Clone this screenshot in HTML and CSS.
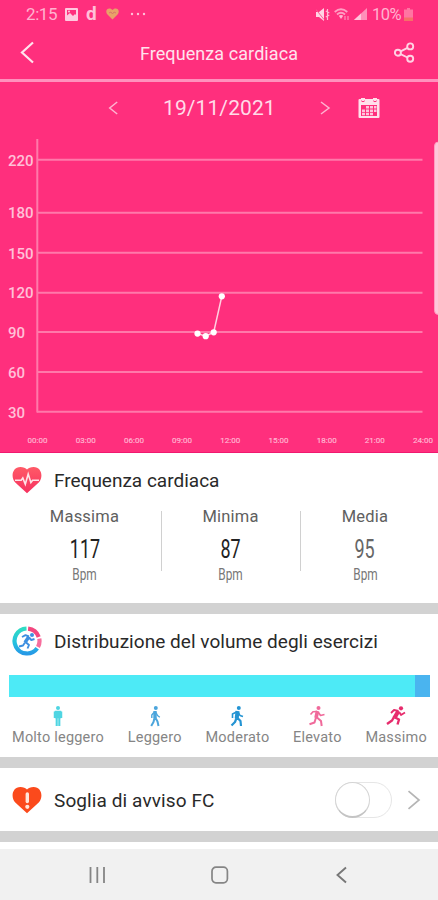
FILE: index.html
```html
<!DOCTYPE html>
<html lang="it">
<head>
<meta charset="utf-8">
<meta name="viewport" content="width=device-width">
<title>Frequenza cardiaca</title>
<link rel="stylesheet" href="styles.css">
</head>
<body>
<div class="phone">
  <section class="hero">
    <div class="status">
      <span class="clock">2:15</span>
      <svg class="ic-photo" width="13" height="13" viewBox="0 0 13 13"><path fill="#ffc9df" fill-rule="evenodd" d="M1 0h11a1 1 0 0 1 1 1v11a1 1 0 0 1-1 1H1a1 1 0 0 1-1-1V1a1 1 0 0 1 1-1zM2 2v5.500L5 5l3 3 2-2 1 1V2z"/><circle cx="4" cy="3.500" r="1" fill="#ffc9df"/></svg>
      <span class="d-mark">d</span>
      <svg class="ic-fit" width="13" height="12" viewBox="0 0 13 12"><path fill="#e8a268" d="M6.500 11.500L1 6C-.8 3 1 .5 3.300.5c1.500 0 2.500.7 3.200 1.600C7.200 1.200 8.200.5 9.700.5 12 .5 13.800 3 12 6z"/><path d="M3 5l2-1 1.500 2L8 4l2 1" fill="none" stroke="#d97968"/></svg>
      <svg class="ic-more" width="16" height="4" viewBox="0 0 16 4"><g fill="#ffc0d9"><circle cx="2" cy="2" r="1.200"/><circle cx="8" cy="2" r="1.200"/><circle cx="14" cy="2" r="1.200"/></g></svg>
      <div class="status-right">
        <svg width="14" height="13" viewBox="0 0 14 13"><path fill="#ffd3e4" d="M0 4h3l5-4v13L3 9H0z"/><path d="M0 1.500l8 10" stroke="#ff5c98" stroke-width="1"/><path d="M11.500 1v11M9.800 3l3.500 2M9.800 9l3.500-2" stroke="#ffb8d3" stroke-width="1.200" fill="none"/></svg>
        <svg width="16" height="13" viewBox="0 0 16 13"><g fill="none" stroke="#ff9fc3" stroke-width="1.800"><path d="M.7 4Q7 -1.500 13.300 4M3 6.500q4-3.500 8 0"/></g><path d="M4.800 7.700q2.200-1.500 4.400 0L7 11z" fill="#ffb8d3"/><path d="M11 12V8M14 8v4" stroke="#ff8fb9" stroke-width="1.200"/></svg>
        <svg width="13" height="12" viewBox="0 0 13 12"><path fill="#ff8fb9" d="M13 0v12H0z"/><path fill="#ffc5db" d="M7 5.500V12H0z"/></svg>
        <span class="pct">10%</span>
        <svg class="ic-batt" width="9" height="13" viewBox="0 0 9 13"><path fill="#ff75a2" d="M3 0h3v1.500h3V13H0V1.500h3z"/><path fill="#f66f68" d="M0 9.500h9V13H0z"/></svg>
      </div>
    </div>
    <header class="bar">
      <svg width="16" height="24" viewBox="0 0 16 24"><path d="M14 2.500L3 12.500l11 10" fill="none" stroke="#ffe3ed" stroke-width="2.200"/></svg>
      <h1>Frequenza cardiaca</h1>
      <svg width="22" height="22" viewBox="0 0 22 22"><g fill="none" stroke="#ffd3e4" stroke-width="1.900"><circle cx="4.900" cy="11.700" r="3"/><circle cx="17.200" cy="5.400" r="3"/><circle cx="17.200" cy="17.800" r="3"/><path d="M7.600 10.300l6.900-3.500M7.600 13.100l6.900 3.400"/></g></svg>
    </header>
    <div class="date-row">
      <svg class="prev" width="10" height="14" viewBox="0 0 10 14"><path d="M9.200 1L1.700 7l7.500 6" fill="none" stroke="#ffb3d0" stroke-width="1.500"/></svg>
      <span class="date">19/11/2021</span>
      <svg class="next" width="11" height="14" viewBox="0 0 11 14"><path d="M1 1l8 6-8 6" fill="none" stroke="#ffb3d0" stroke-width="1.500"/></svg>
      <svg class="cal" width="22" height="22" viewBox="0 0 22 22"><path fill="#ffe0eb" fill-rule="evenodd" d="M1.500 2H3V1h4v1h8V1h4v1h1.500a1 1 0 0 1 1 1v17a1 1 0 0 1-1 1h-19a1 1 0 0 1-1-1V3a1 1 0 0 1 1-1zM3 8v11h16V8z"/><g fill="#ffc5db"><path d="M8 9h3v2.600H8zM12 9h3v2.600h-3zM16 9h2.500v2.600H16zM4 12.400h3V15H4zM8 12.400h3V15H8zM12 12.400h3V15h-3zM16 12.400h2.500V15H16zM4 15.800h3v2.400H4zM8 15.800h3v2.400H8zM12 15.800h3v2.400h-3z"/></g><path d="M3.200 3.800q1.800 2 3.600 0M15.200 3.800q1.800 2 3.600 0" fill="none" stroke="#ff2f7d"/></svg>
    </div>
    <svg class="chart" width="438" height="322" viewBox="0 130 438 322">
      <g stroke="#ff79aa" stroke-width="2">
        <path d="M37 159.800H422.500M37 212.700H422.500M37 252.700H422.500M37 292.700H422.500M37 332H422.500M37 372H422.500M37 411.700H422.500"/>
        <path d="M37.300 139V412.500"/>
      </g>
      <g class="y-labels">
        <text x="8" y="165.600" textLength="25.500">220</text>
        <text x="8" y="218.400" textLength="25.500">180</text>
        <text x="8" y="258.600" textLength="25.500">150</text>
        <text x="8" y="298.400" textLength="25.500">120</text>
        <text x="8" y="338" textLength="17">90</text>
        <text x="8" y="378" textLength="17">60</text>
        <text x="8" y="417.800" textLength="17">30</text>
      </g>
      <g class="x-labels">
        <text x="37.500" y="443.300">00:00</text><text x="85.700" y="443.300">03:00</text><text x="134" y="443.300">06:00</text><text x="182" y="443.300">09:00</text><text x="230.300" y="443.300">12:00</text><text x="278.500" y="443.300">15:00</text><text x="326.800" y="443.300">18:00</text><text x="374.800" y="443.300">21:00</text><text x="423" y="443.300">24:00</text>
      </g>
      <path d="M197.500 333.500L205.700 336.200 213.700 332.200 221.800 296.300" fill="none" stroke="#ffd0e1" stroke-width="1.500"/>
      <g fill="#fff"><circle cx="197.500" cy="333.600" r="3.100"/><circle cx="205.700" cy="336.200" r="3.100"/><circle cx="213.700" cy="332.300" r="3.100"/><circle cx="221.800" cy="296.300" r="3.100"/></g>
      <rect x="434.500" y="142" width="10" height="172.500" rx="4" fill="#ffc6da" stroke="#ff9bbf"/>
    </svg>
  </section>

  <section class="card rate">
    <div class="title">
      <svg width="30" height="28" viewBox="0 0 30 28"><defs><linearGradient id="h" x1="0" y1="0" x2="0" y2="1"><stop offset="0" stop-color="#ff5a67"/><stop offset="1" stop-color="#f6315f"/></linearGradient></defs><path fill="url(#h)" d="M15 27.300L3 16.200C-1.500 11 .3 1 8.400 1c3 0 5.200 1 6.600 2.500C16.400 2 18.600 1 21.600 1 29.700 1 31.500 11 27 16.200z"/><path d="M3 14.200h6.200l1.600-2.200 2.500 6.300L16.200 8l2.700 8.500 1.700-2.300H27" fill="none" stroke="#ffe3e7" stroke-width="1.600"/></svg>
      <h2 class="t1">Frequenza cardiaca</h2>
    </div>
    <div class="stats">
      <div class="stat first"><span class="name">Massima</span><span class="num">117</span><span class="unit">Bpm</span></div>
      <div class="stat"><span class="name">Minima</span><span class="num">87</span><span class="unit">Bpm</span></div>
      <div class="stat last"><span class="name">Media</span><span class="num soft">95</span><span class="unit">Bpm</span></div>
    </div>
  </section>

  <section class="card volume">
    <div class="title">
      <svg width="30" height="30" viewBox="0 0 30 30"><defs><linearGradient id="r" x1="0" y1="0" x2="0" y2="1"><stop offset="0" stop-color="#2fdcc4"/><stop offset=".6" stop-color="#24bfe0"/><stop offset="1" stop-color="#269ae6"/></linearGradient></defs><g fill="none" stroke-width="4.200"><path d="M14.500 2.500A12.500 12.500 0 1 0 25.200 22.300" stroke="url(#r)"/><path d="M16.100 2.600A12.500 12.500 0 0 1 26.700 11" stroke="#f3477f"/><path d="M27.300 12.700A12.500 12.500 0 0 1 26 21" stroke="#f76d9d"/></g><circle cx="20" cy="9" r="2" fill="#3d8fe0"/><path d="M17 10.500l-4 6" stroke="#3d8fe0" stroke-width="3.400"/><path d="M10 11l3.500-1.800 3.500 1.300M13.500 16l3.500 3-1.500 3.500M13 16.500l-2 3-4 1M17.300 12l2 2 3.200-1" fill="none" stroke="#3d8fe0" stroke-width="1.900" stroke-linejoin="round"/></svg>
      <h2 class="t2">Distribuzione del volume degli esercizi</h2>
    </div>
    <div class="meter"><i></i></div>
    <div class="levels">
      <div class="level"><svg width="20" height="22" viewBox="0 0 20 22" fill="none" stroke="#4fd5e2"><circle cx="10" cy="3" r="2" fill="#4fd5e2" stroke="none"/><path d="M7.500 6.500h5v6h-5z" fill="#4fd5e2" stroke-width="1.500"/><path d="M6.500 6.500v6.500M13.500 6.500v6.500" stroke-width="1.500"/><path d="M8.700 12v9M11.300 12v9" stroke-width="2.100"/></svg><span>Molto leggero</span></div>
      <div class="level"><svg width="20" height="22" viewBox="0 0 20 22" fill="none" stroke="#4ba5dc" stroke-linejoin="round"><circle cx="10.800" cy="3" r="2" fill="#4ba5dc" stroke="none"/><path d="M10 6v7" stroke-width="3.400"/><path d="M9 7.500L6.800 10v3M11 7.500l1.500 3 2.300 1.700" stroke-width="1.400"/><path d="M9.500 13l-1 4-2.300 4M10.500 13l2 3.500 1 4.500" stroke-width="2"/></svg><span>Leggero</span></div>
      <div class="level"><svg width="20" height="22" viewBox="0 0 20 22" fill="none" stroke="#2494d3" stroke-linejoin="round"><circle cx="11.800" cy="3" r="2" fill="#2494d3" stroke="none"/><path d="M10.500 6l-.8 7.500" stroke-width="4"/><path d="M9.500 7L5.500 9v4M11.500 7.500l1.500 3 3 1" stroke-width="1.600"/><path d="M9.500 13l-1.500 4-3.500 3.500M10.500 13l3 3 .5 5" stroke-width="2.200"/></svg><span>Moderato</span></div>
      <div class="level"><svg width="20" height="22" viewBox="0 0 20 22" fill="none" stroke="#f06a9b" stroke-linejoin="round"><circle cx="11.500" cy="3" r="2" fill="#f06a9b" stroke="none"/><path d="M10.500 6l-1.500 7" stroke-width="3.600"/><path d="M10 6.500L6 6.700 3.500 9.500M11.500 7.500l2 3 4-1" stroke-width="1.600"/><path d="M9 12.500l-1.500 5-5 1.700M10 12.500l4 3.500.7 5" stroke-width="2"/></svg><span>Elevato</span></div>
      <div class="level"><svg width="20" height="22" viewBox="0 0 20 22" fill="none" stroke="#e72c6d" stroke-linejoin="round"><circle cx="15" cy="3.300" r="2.100" fill="#e72c6d" stroke="none"/><path d="M12.500 6L8.500 12.800" stroke-width="4.200"/><path d="M12.500 6L8 5 5 8M13.500 7.500l1.500 2.500 4-2.500" stroke-width="1.800"/><path d="M8 12l-2 3.500-5 3.500M9 12.500l4 2-1.500 5" stroke-width="2.400"/></svg><span>Massimo</span></div>
    </div>
  </section>

  <section class="card alert">
    <svg width="30" height="28" viewBox="0 0 30 28"><path fill="#fb4a1c" d="M15 27.300L3 16.200C-1.500 11 .3 1 8.400 1c3 0 5.200 1 6.600 2.500C16.400 2 18.600 1 21.600 1 29.700 1 31.500 11 27 16.200z"/><path d="M15.300 8v7.500" stroke="#ffe5da" stroke-width="3.400" stroke-linecap="round"/><circle cx="15.300" cy="20.800" r="2.100" fill="#ffe5da"/></svg>
    <h2 class="t3">Soglia di avviso FC</h2>
    <span class="switch"><i></i></span>
    <svg class="chev" width="14" height="20" viewBox="0 0 14 20"><path d="M1.500 1.200L12 10 1.500 18.800" fill="none" stroke="#b5b5b5" stroke-width="1.700"/></svg>
  </section>

  <nav class="nav">
    <svg width="18" height="18" viewBox="0 0 18 18"><path d="M2.500 1v16M9.300 1v16M16 1v16" stroke="#858585" stroke-width="1.800"/></svg>
    <svg width="18" height="18" viewBox="0 0 18 18"><rect x="1" y="1.200" width="15.400" height="15.600" rx="4" fill="none" stroke="#858585" stroke-width="1.700"/></svg>
    <svg width="18" height="18" viewBox="0 0 18 18"><path d="M13 1.500L4.500 9l8.500 7.500" fill="none" stroke="#777" stroke-width="1.900"/></svg>
  </nav>
</div>
</body>
</html>
```
FILE: styles.css
```css
* { box-sizing: border-box; }
body { margin: 0; background: #fff; font-family: Roboto, "Liberation Sans", sans-serif; }
svg { display: block; flex: none; }
h1, h2 { margin: 0; font-weight: 400; white-space: nowrap; }
.phone { width: 438px; height: 900px; overflow: hidden; display: flex; flex-direction: column; }

.hero { height: 453px; flex: none; background: #ff2f7d; border-bottom: 1px solid #f01870; }
.status { display: flex; align-items: center; height: 28px; padding: 0 24px 0 26px; color: #ffb3d0; }
.clock { width: 39px; font-size: 17px; letter-spacing: -.4px; }
.d-mark { width: 13px; margin-left: 8px; font-size: 19px; font-weight: 700; line-height: 20px; color: #ffc0d9; }
.ic-fit { margin-left: 7px; }
.ic-more { margin-left: 11px; }
.status-right { display: flex; align-items: center; margin-left: auto; }
.status-right svg + svg { margin-left: 4px; }
.pct { margin-left: 5px; font-size: 16.500px; letter-spacing: -.5px; width: 31px; white-space: nowrap; }
.status-right .ic-batt { margin-left: 1px; margin-right: 1px; }

.bar { display: flex; align-items: center; height: 54px; padding: 0 23px 3px 19px; border-bottom: 3px solid #ff91bd; }
.bar h1 { flex: 1; padding: 2px 0 0 10px; text-align: center; font-size: 18px; letter-spacing: .08px; color: #ffe3ed; }

.date-row { display: flex; align-items: center; height: 48px; padding: 4px 0 0 108px; }
.date { margin-left: 45px; width: 113px; font-size: 21px; letter-spacing: .1px; color: #ffdbe8; white-space: nowrap; }
.next { margin-left: 44px; }
.cal { margin-left: 27px; }

.y-labels text { font-size: 15px; font-weight: 500; fill: #ffc0d8; }
.x-labels text { font-size: 8px; text-anchor: middle; fill: #ffb3d0; stroke: #ffb3d0; stroke-width: .2px; }

.card { flex: none; background: #fff; border-bottom: 11px solid #d2d2d2; }
.title { display: flex; align-items: center; gap: 12px; padding-left: 12px; }
h2 { font-size: 19px; color: #292929; }
.t2 { letter-spacing: .04px; }
.t3 { letter-spacing: .1px; }

.rate { height: 161px; padding-top: 13px; }
.stats { display: grid; grid-template-columns: 161px 139px 138px; margin-top: 13px; }
.stat { display: flex; flex-direction: column; align-items: center; position: relative; }
.stat.first { padding-left: 8px; }
.stat.last { padding-right: 8px; }
.stat:not(.first)::before { content: ""; position: absolute; left: 0; top: 4px; width: 1px; height: 60px; background: #d0d0d0; }
.name { font-size: 16.500px; line-height: 20px; letter-spacing: .2px; color: #606060; }
.num { margin-top: 8px; font-size: 26px; line-height: 28px; color: #222; transform: scaleX(.69); }
.num.soft { color: #666; }
.unit { margin-top: 2px; font-size: 16px; line-height: 20px; color: #777; transform: scaleX(.74); }

.volume { height: 154px; padding-top: 12px; }
.meter { margin: 19px 8px 0 9px; height: 22px; background: #4deaf6; display: flex; justify-content: flex-end; }
.meter i { width: 15px; background: #4ab4ef; }
.levels { display: flex; justify-content: space-between; padding: 8px 11px 0 12px; }
.level { display: flex; flex-direction: column; align-items: center; font-size: 14.500px; line-height: 22px; letter-spacing: .22px; color: #858585; white-space: nowrap; }

.alert { height: 74px; display: flex; align-items: center; padding: 1px 17px 0 12px; }
.alert h2 { margin-left: 12px; }
.switch { margin-left: auto; width: 57px; height: 36px; border: 1px solid #e6e6e6; border-radius: 18px; }
.switch i { display: block; width: 35px; height: 36px; margin: -1px; border: 1px solid #d4d4d4; border-bottom: 2px solid #c4c4c4; border-radius: 50%; background: #fff; }
.chev { margin-left: 15px; }

.nav { margin-top: auto; height: 51px; flex: none; display: flex; justify-content: space-between; align-items: center; padding: 1px 87px 0 88px; background: #f1f1f1; }
```
